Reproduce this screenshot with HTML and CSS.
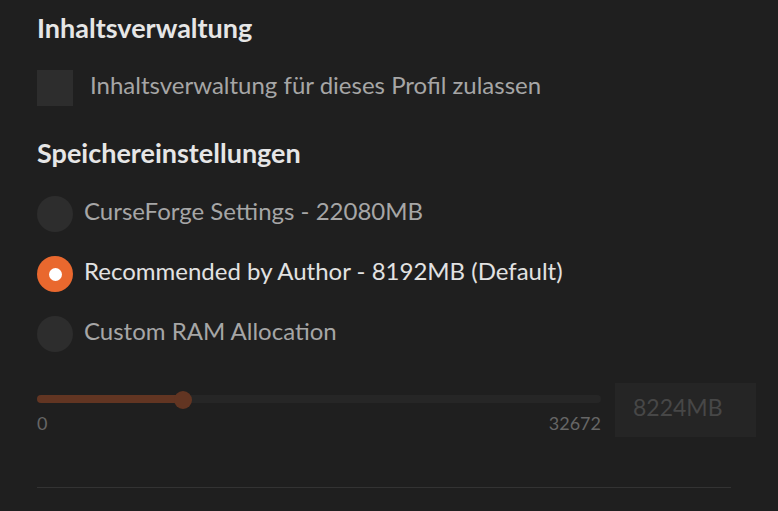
FILE: index.html
```html
<!DOCTYPE html>
<html lang="de">
<head>
<meta charset="utf-8">
<title>Profil</title>
<link rel="stylesheet" href="styles.css">
</head>
<body>
<div class="panel">
  <h2 class="section-title">Inhaltsverwaltung</h2>
  <div class="check-row">
    <span class="checkbox"></span>
    <span class="check-label">Inhaltsverwaltung für dieses Profil zulassen</span>
  </div>

  <h2 class="section-title second">Speichereinstellungen</h2>
  <div class="radio-list">
    <div class="radio-row">
      <span class="radio"></span>
      <span class="radio-label">CurseForge Settings - 22080MB</span>
    </div>
    <div class="radio-row">
      <span class="radio selected"><span class="dot"></span></span>
      <span class="radio-label active">Recommended by Author - 8192MB (Default)</span>
    </div>
    <div class="radio-row">
      <span class="radio"></span>
      <span class="radio-label">Custom RAM Allocation</span>
    </div>
  </div>

  <div class="ram-row">
    <div class="slider">
      <div class="track">
        <div class="fill" style="width: 146px"></div>
        <div class="thumb" style="left: 137px"></div>
      </div>
      <div class="scale">
        <span>0</span>
        <span>32672</span>
      </div>
    </div>
    <div class="ram-input">8224MB</div>
  </div>

  <div class="divider"></div>
</div>
</body>
</html>
```

FILE: styles.css
```css
html, body {
  margin: 0;
  padding: 0;
  background: #1f1f1f;
}

body {
  font-family: Lato, "Open Sans", "Liberation Sans", sans-serif;
  width: 778px;
  height: 511px;
  overflow: hidden;
}

.panel {
  padding: 12px 22px 0 37px;
}

.section-title {
  margin: 0;
  font-size: 27px;
  line-height: 32px;
  font-weight: 700;
  color: #e6e6e6;
}

.section-title.second {
  margin-top: 31px;
}

.check-row {
  margin-top: 26px;
  display: flex;
  align-items: flex-start;
  gap: 17px;
  height: 36px;
}

.checkbox {
  width: 36px;
  height: 36px;
  background: #2d2d2d;
  flex: none;
}

.check-label {
  font-size: 24px;
  line-height: 30px;
  color: #a6a6a6;
}

.radio-list {
  margin-top: 27px;
  display: flex;
  flex-direction: column;
  gap: 24px;
}

.radio-row {
  display: flex;
  align-items: flex-start;
  gap: 11px;
  height: 36px;
}

.radio {
  width: 36px;
  height: 36px;
  border-radius: 50%;
  background: #2d2d2d;
  flex: none;
  display: flex;
  align-items: center;
  justify-content: center;
}

.radio.selected {
  background: #e9682e;
}

.dot {
  width: 13px;
  height: 13px;
  border-radius: 50%;
  background: #ffffff;
}

.radio-label {
  font-size: 24px;
  line-height: 30px;
  color: #a6a6a6;
}

.radio-label.active {
  color: #e2e2e2;
}

.ram-row {
  margin-top: 31px;
  display: flex;
  gap: 14px;
}

.slider {
  width: 564px;
  padding-top: 12px;
}

.track {
  position: relative;
  height: 8px;
  border-radius: 4px;
  background: #262626;
}

.fill {
  position: absolute;
  left: 0;
  top: 0;
  bottom: 0;
  border-radius: 4px;
  background: #623522;
}

.thumb {
  position: absolute;
  top: -4px;
  width: 18px;
  height: 18px;
  border-radius: 50%;
  background: #623522;
}

.scale {
  margin-top: 10px;
  display: flex;
  justify-content: space-between;
  font-size: 18px;
  line-height: 20px;
  color: #666666;
}

.ram-input {
  width: 123px;
  height: 54px;
  padding-left: 18px;
  background: #252525;
  font-size: 23px;
  line-height: 49px;
  color: #474747;
}

.divider {
  margin-top: 50px;
  margin-right: 25px;
  height: 1px;
  background: #333333;
}
```
